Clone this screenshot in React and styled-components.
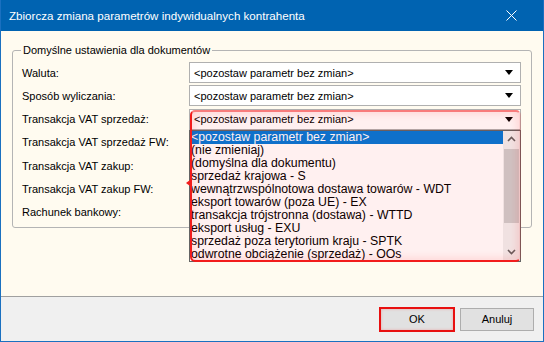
import React from 'react'
import styled, { createGlobalStyle } from 'styled-components'

const Global = createGlobalStyle`
  html, body { margin: 0; padding: 0; background: #ffffff; }
  * { box-sizing: border-box; }
`;

const Window = styled.div`
  width: 544px;
  height: 342px;
  border: 1px solid #1a70c0;
  border-top: none;
  display: flex;
  flex-direction: column;
  font-family: "Liberation Sans", Arial, sans-serif;
  font-size: 11px;
  color: #000;
  overflow: hidden;
`;

const TitleBar = styled.div`
  height: 31px;
  flex: none;
  background: #0063b1;
  color: #fff;
  display: flex;
  align-items: center;
  justify-content: space-between;
  padding: 0 26px 0 8px;
  font-size: 11.6px;
`;

const Body = styled.div`
  flex: 1;
  background: #fffbf0;
  padding: 12px 11px 0 11px;
`;

const GroupBox = styled.fieldset`
  margin: 0;
  padding: 5px 10px 4px 9px;
  border: 1px solid #b4b4b4;
  border-radius: 3px;
  min-width: 0;
`;

const Legend = styled.legend`
  padding: 0 2px;
  margin-left: -1px;
  line-height: 14px;
  font-size: 11px;
`;

const Form = styled.div`
  display: grid;
  grid-template-columns: 167px 1fr;
  grid-auto-rows: 21px;
  row-gap: 2.3px;
  align-items: center;
`;

const Label = styled.div`
  white-space: nowrap;
  font-size: 11px;
`;

const ComboWrap = styled.div`
  position: relative;
  height: 21px;
`;

const Combo = styled.div`
  height: 21px;
  background: #fff;
  border: 1px solid #b0b0b0;
  display: flex;
  align-items: center;
  justify-content: space-between;
  padding: 0 7px 0 4px;
  font-size: 11px;
`;

const Arrow = styled.span`
  width: 0;
  height: 0;
  border-left: 4px solid transparent;
  border-right: 4px solid transparent;
  border-top: 5px solid #000;
`;

const List = styled.div`
  position: absolute;
  left: 0;
  top: 21px;
  width: 100%;
  height: 132px;
  background: #fff;
  border: 1px solid #646464;
  display: flex;
  z-index: 2;
`;

const Items = styled.div`
  flex: 1;
  display: flex;
  flex-direction: column;
`;

const Item = styled.div`
  height: 13px;
  line-height: 13px;
  padding-left: 1px;
  white-space: nowrap;
  font-size: 12.3px;
  background: ${p => (p.$selected ? '#0078d7' : 'transparent')};
  color: ${p => (p.$selected ? '#fff' : '#000')};
`;

const ScrollBar = styled.div`
  width: 17px;
  flex: none;
  background: #f0f0f0;
  display: flex;
  flex-direction: column;
`;

const ScrollBtn = styled.div`
  height: 17px;
  display: flex;
  align-items: center;
  justify-content: center;
`;

const Track = styled.div`
  flex: 1;
  padding: 0 1px;
  display: flex;
  flex-direction: column;
`;

const Thumb = styled.div`
  margin-top: 1px;
  height: 74px;
  background: #cdcdcd;
`;

const Highlight = styled.div`
  position: absolute;
  left: 1px;
  top: 1px;
  width: 331px;
  height: 152px;
  border: 2px solid #f21c1c;
  border-right-color: rgba(242, 28, 28, 0.15);
  border-top-color: rgba(242, 28, 28, 0.55);
  border-radius: 5px;
  background: rgba(255, 0, 0, 0.06);
  box-shadow: inset 0 0 12px rgba(255, 0, 0, 0.16);
  z-index: 3;
  pointer-events: none;

  &::before {
    content: '';
    position: absolute;
    left: -6px;
    top: 68px;
    border-top: 3px solid transparent;
    border-bottom: 3px solid transparent;
    border-right: 4px solid #f21c1c;
  }
`;

const Footer = styled.div`
  height: 45px;
  flex: none;
  background: #f0f0f0;
  border-top: 1px solid #a0a0a0;
  display: flex;
  justify-content: flex-end;
  align-items: center;
  gap: 6px;
  padding: 0 9px 0 0;
`;

const Button = styled.button`
  width: 74px;
  height: 23px;
  background: #e1e1e1;
  border: 1px solid ${p => (p.$marked ? '#e81010' : '#adadad')};
  box-shadow: ${p => (p.$marked ? '0 0 0 1px #e81010, inset 0 0 3px rgba(255,0,0,0.25)' : 'none')};
  font-family: "Liberation Sans", Arial, sans-serif;
  font-size: 11px;
  color: #000;
  padding: 0;
`;

const Chevron = ({ up }) => (
  <svg width="9" height="6" viewBox="0 0 9 6">
    <path
      d={up ? 'M1 5 L4.5 1.5 L8 5' : 'M1 1 L4.5 4.5 L8 1'}
      fill="none"
      stroke="#606060"
      strokeWidth="1.6"
    />
  </svg>
);

const rows = [
  'Waluta:',
  'Sposób wyliczania:',
  'Transakcja VAT sprzedaż:',
  'Transakcja VAT sprzedaż FW:',
  'Transakcja VAT zakup:',
  'Transakcja VAT zakup FW:',
  'Rachunek bankowy:',
];

const options = [
  '<pozostaw parametr bez zmian>',
  '(nie zmieniaj)',
  '(domyślna dla dokumentu)',
  'sprzedaż krajowa - S',
  'wewnątrzwspólnotowa dostawa towarów - WDT',
  'eksport towarów (poza UE) - EX',
  'transakcja trójstronna (dostawa) - WTTD',
  'eksport usług - EXU',
  'sprzedaż poza terytorium kraju - SPTK',
  'odwrotne obciążenie (sprzedaż) - OOs',
];

const KEEP = '<pozostaw parametr bez zmian>';

export default function App() {
  return (
    <>
      <Global />
      <Window>
        <TitleBar>
          <span>Zbiorcza zmiana parametrów indywidualnych kontrahenta</span>
          <svg width="11" height="11" viewBox="0 0 11 11">
            <path d="M0.5 0.5 L10.5 10.5 M10.5 0.5 L0.5 10.5" stroke="#fff" strokeWidth="1" />
          </svg>
        </TitleBar>
        <Body>
          <GroupBox>
            <Legend>Domyślne ustawienia dla dokumentów</Legend>
            <Form>
              {rows.map((label, i) => (
                <React.Fragment key={label}>
                  <Label>{label}</Label>
                  {i < 3 ? (
                    <ComboWrap>
                      <Combo>
                        <span>{KEEP}</span>
                        <Arrow />
                      </Combo>
                      {i === 2 && (
                        <>
                          <List>
                            <Items>
                              {options.map((o, j) => (
                                <Item key={o} $selected={j === 0}>{o}</Item>
                              ))}
                            </Items>
                            <ScrollBar>
                              <ScrollBtn><Chevron up /></ScrollBtn>
                              <Track><Thumb /></Track>
                              <ScrollBtn><Chevron /></ScrollBtn>
                            </ScrollBar>
                          </List>
                          <Highlight />
                        </>
                      )}
                    </ComboWrap>
                  ) : (
                    <div />
                  )}
                </React.Fragment>
              ))}
            </Form>
          </GroupBox>
        </Body>
        <Footer>
          <Button $marked>OK</Button>
          <Button>Anuluj</Button>
        </Footer>
      </Window>
    </>
  );
}
